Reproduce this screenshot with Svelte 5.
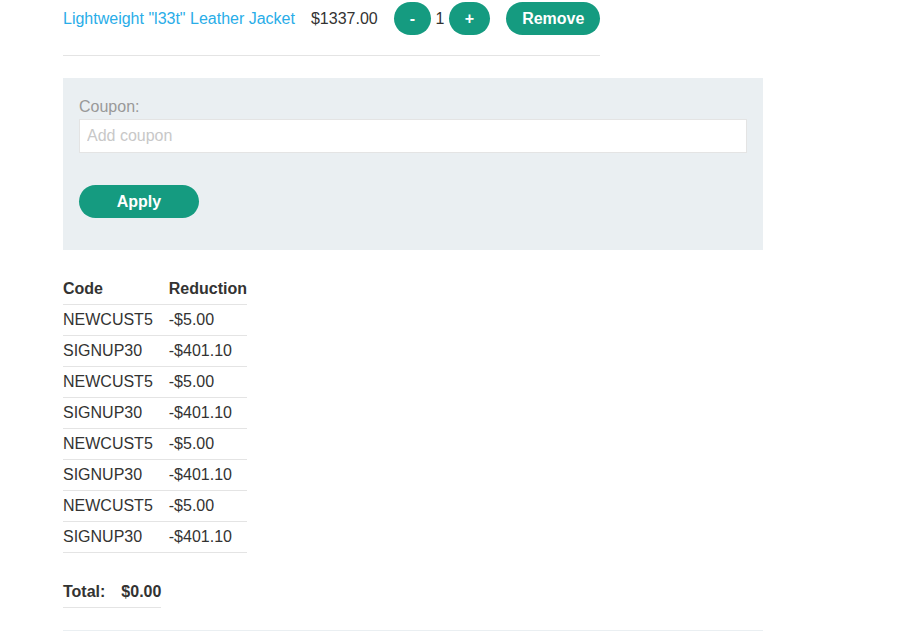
<script>
  const price = 1337;
  let quantity = $state(1);
  let inCart = $state(true);
  let coupon = $state('');
  const reductions = [
    { code: 'NEWCUST5', amount: 5 },
    { code: 'SIGNUP30', amount: 401.1 },
    { code: 'NEWCUST5', amount: 5 },
    { code: 'SIGNUP30', amount: 401.1 },
    { code: 'NEWCUST5', amount: 5 },
    { code: 'SIGNUP30', amount: 401.1 },
    { code: 'NEWCUST5', amount: 5 },
    { code: 'SIGNUP30', amount: 401.1 }
  ];
  const saved = reductions.reduce((sum, r) => sum + r.amount, 0);
  const total = $derived(Math.max(0, (inCart ? quantity * price : 0) - saved));
  const money = (value) => '$' + value.toFixed(2);
</script>

<main>
  {#if inCart}
    <table class="items">
      <tbody>
        <tr>
          <td><a href="#product">Lightweight "l33t" Leather Jacket</a></td>
          <td>{money(price)}</td>
          <td>
            <button type="button" aria-label="Decrease quantity" onclick={() => (quantity = Math.max(1, quantity - 1))}>-</button>
            {quantity}
            <button type="button" aria-label="Increase quantity" onclick={() => (quantity += 1)}>+</button>
          </td>
          <td><button type="button" onclick={() => (inCart = false)}>Remove</button></td>
        </tr>
      </tbody>
    </table>
  {/if}

  <form onsubmit={(e) => e.preventDefault()}>
    <label for="coupon">Coupon:</label>
    <input id="coupon" type="text" placeholder="Add coupon" bind:value={coupon} />
    <button class="apply" type="submit">Apply</button>
  </form>

  <table class="reductions">
    <thead>
      <tr><th scope="col">Code</th><th scope="col">Reduction</th></tr>
    </thead>
    <tbody>
      {#each reductions as { code, amount }}
        <tr><td>{code}</td><td>-{money(amount)}</td></tr>
      {/each}
    </tbody>
  </table>

  <table class="total">
    <tbody>
      <tr><th scope="row">Total:</th><th>{money(total)}</th></tr>
    </tbody>
  </table>

  <hr />
</main>

<style>
  :global(body) {
    margin: 0;
    background: #fff;
  }
  main {
    box-sizing: border-box;
    max-width: 764px;
    padding: 2px 1px 0 63px;
    color: #333332;
    font: 16px/22px "Liberation Sans", Arial, sans-serif;
  }
  table {
    border-collapse: separate;
    border-spacing: 0;
  }
  th,
  td {
    padding: 4px 16px 4px 0;
    border-bottom: 1px solid #e4e4e4;
    text-align: left;
    white-space: nowrap;
  }
  th:last-child,
  td:last-child {
    padding-right: 0;
  }
  .items td {
    padding-top: 0;
    padding-bottom: 20px;
    line-height: 33px;
  }
  a {
    color: #29ade8;
    text-decoration: none;
  }
  button {
    height: 33px;
    padding: 0 16px;
    border: 0;
    border-radius: 17px;
    background: #159b80;
    color: #fff;
    font: bold 16px/33px "Liberation Sans", Arial, sans-serif;
    vertical-align: top;
    cursor: pointer;
  }
  form {
    margin: 22px 0;
    padding: 16px 16px 32px;
    background: #eaeff2;
  }
  label {
    display: block;
    color: #999;
    line-height: 25px;
  }
  input {
    display: block;
    box-sizing: border-box;
    width: 100%;
    height: 34px;
    margin-bottom: 32px;
    padding: 0 7px;
    border: 1px solid #e4e4e4;
    border-radius: 0;
    background: #fff;
    color: #333332;
    font: inherit;
  }
  input::placeholder {
    color: #c8c8c8;
    opacity: 1;
  }
  .apply {
    display: block;
    min-width: 120px;
  }
  .reductions {
    margin-top: 24px;
  }
  .total {
    margin-top: 24px;
  }
  hr {
    margin: 22px 0 0;
    border: 0;
    border-top: 1px solid #eaeff2;
  }
</style>
